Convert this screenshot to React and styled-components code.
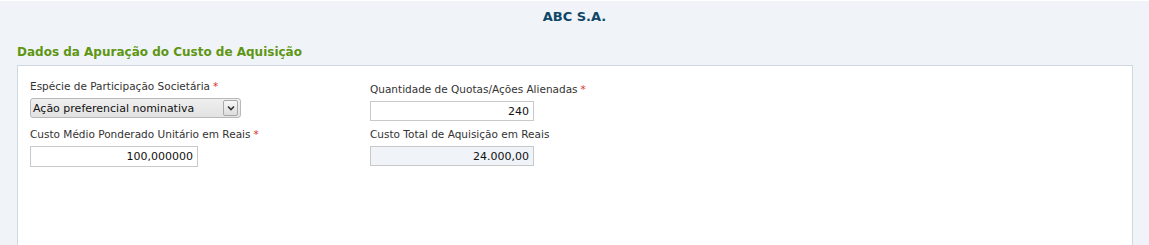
import React from 'react';
import styled, { createGlobalStyle } from 'styled-components';

const Global = createGlobalStyle`
  html, body { margin: 0; padding: 0; }
  body {
    background: #f0f4f9;
    font-family: "DejaVu Sans", Verdana, sans-serif;
  }
`;

const Page = styled.div`
  height: 245px;
  overflow: hidden;
  border-top: 1px solid #ffffff;
  display: flex;
  flex-direction: column;
`;

const Company = styled.h1`
  margin: 0;
  padding-top: 8px;
  height: 22px;
  text-align: center;
  font-size: 13px;
  font-weight: bold;
  color: #0e4766;
  line-height: 16px;
`;

const SectionTitle = styled.h2`
  margin: 13px 0 0 17px;
  font-size: 12px;
  font-weight: bold;
  color: #5e9612;
  line-height: 16px;
  height: 21px;
`;

const Panel = styled.div`
  flex: 1;
  margin: 0 16px 0 17px;
  background: #ffffff;
  border: 1px solid #cfd7e0;
  border-bottom: none;
  display: flex;
  padding-left: 12px;
`;

const Column = styled.div`
  width: ${p => p.$width}px;
  padding-top: ${p => p.$top}px;
  display: flex;
  flex-direction: column;
  gap: ${p => p.$gap}px;
`;

const Field = styled.div`
  display: flex;
  flex-direction: column;
`;

const Label = styled.label`
  font-size: 10.5px;
  line-height: 16px;
  color: #333333;
  margin-bottom: 4px;
`;

const Required = styled.span`
  color: #d8322c;
  margin-left: 3px;
`;

const SelectBox = styled.div`
  width: 211px;
  height: 20px;
  box-sizing: border-box;
  border: 1px solid #b9b9b9;
  border-radius: 3px;
  background: linear-gradient(#efefef, #e2e2e2);
  display: flex;
  align-items: center;
  font-size: 11px;
  color: #111111;
  padding-left: 2px;
`;

const SelectText = styled.span`
  flex: 1;
`;

const ArrowBox = styled.span`
  width: 13px;
  height: 14px;
  margin-right: 2px;
  border: 1px solid #a9a9a9;
  border-radius: 2px;
  background: linear-gradient(#f7f7f7, #dcdcdc);
  display: flex;
  align-items: center;
  justify-content: center;
`;

const Input = styled.input`
  width: ${p => p.$width}px;
  height: ${p => p.$height}px;
  box-sizing: border-box;
  border: 1px solid #c9c9c9;
  background: ${p => (p.readOnly ? '#f0f4f9' : '#ffffff')};
  font-family: "DejaVu Sans", Verdana, sans-serif;
  font-size: 11px;
  color: #111111;
  text-align: right;
  padding: 0 4px 0 2px;
  outline: none;
`;

export default function App() {
  return (
    <>
      <Global />
      <Page>
        <Company>ABC S.A.</Company>
        <SectionTitle>Dados da Apuração do Custo de Aquisição</SectionTitle>
        <Panel>
          <Column $width={340} $top={12} $gap={8}>
            <Field>
              <Label>Espécie de Participação Societária<Required>*</Required></Label>
              <SelectBox>
                <SelectText>Ação preferencial nominativa</SelectText>
                <ArrowBox>
                  <svg width="8" height="6" viewBox="0 0 8 6">
                    <path d="M1 1.5 L4 4.5 L7 1.5" fill="none" stroke="#333" strokeWidth="1.6" />
                  </svg>
                </ArrowBox>
              </SelectBox>
            </Field>
            <Field>
              <Label>Custo Médio Ponderado Unitário em Reais<Required>*</Required></Label>
              <Input $width={168} $height={21} defaultValue="100,000000" />
            </Field>
          </Column>
          <Column $width={400} $top={15} $gap={5}>
            <Field>
              <Label>Quantidade de Quotas/Ações Alienadas<Required>*</Required></Label>
              <Input $width={164} $height={20} defaultValue="240" />
            </Field>
            <Field>
              <Label>Custo Total de Aquisição em Reais</Label>
              <Input $width={164} $height={20} readOnly defaultValue="24.000,00" />
            </Field>
          </Column>
        </Panel>
      </Page>
    </>
  );
}
